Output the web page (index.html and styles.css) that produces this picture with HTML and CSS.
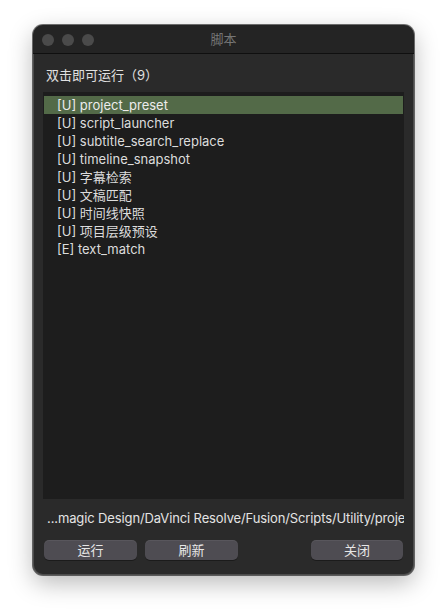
FILE: index.html
```html
<!DOCTYPE html>
<html lang="zh-CN">
<head>
<meta charset="utf-8">
<title>脚本</title>
<link rel="stylesheet" href="styles.css">
</head>
<body>
<div class="window">
  <div class="titlebar">
    <div class="lights"><span class="light"></span><span class="light"></span><span class="light"></span></div>
    <div class="title">脚本</div>
  </div>
  <div class="content">
    <div class="label">双击即可运行（9）</div>
    <ul class="list">
      <li class="row selected">[U] project_preset</li>
      <li class="row">[U] script_launcher</li>
      <li class="row">[U] subtitle_search_replace</li>
      <li class="row">[U] timeline_snapshot</li>
      <li class="row">[U] 字幕检索</li>
      <li class="row">[U] 文稿匹配</li>
      <li class="row">[U] 时间线快照</li>
      <li class="row">[U] 项目层级预设</li>
      <li class="row">[E] text_match</li>
    </ul>
    <div class="path">...magic Design/DaVinci Resolve/Fusion/Scripts/Utility/project_preset.py</div>
    <div class="buttons">
      <button class="btn">运行</button>
      <button class="btn">刷新</button>
      <span class="spacer"></span>
      <button class="btn close">关闭</button>
    </div>
  </div>
</div>
</body>
</html>
```
FILE: styles.css
```css
html, body {
  margin: 0;
  padding: 0;
  background: #ffffff;
}
body {
  width: 448px;
  height: 616px;
  overflow: hidden;
  font-family: "Inter", "Noto Sans CJK SC", sans-serif;
  font-size: 13px;
}
.window {
  margin: 25px 0 0 33px;
  width: 381px;
  height: 550px;
  box-sizing: border-box;
  border-radius: 10px;
  background: #2a2a2a;
  display: flex;
  flex-direction: column;
  overflow: hidden;
  box-shadow: 0 0 0 1px rgba(0,0,0,0.55), inset 0 0 0 1px rgba(255,255,255,0.16), 0 8px 24px rgba(0,0,0,0.28);
}
.titlebar {
  height: 28px;
  flex: none;
  background: #242424;
  border-bottom: 1px solid #0f0f0f;
  display: flex;
  align-items: center;
  position: relative;
}
.lights {
  display: flex;
  gap: 8px;
  padding-left: 9px;
  padding-top: 2px;
}
.light {
  width: 12px;
  height: 12px;
  border-radius: 50%;
  background: #4a4a4a;
}
.title {
  position: absolute;
  left: 0;
  right: 0;
  top: 0;
  line-height: 29px;
  text-align: center;
  color: #767676;
  font-size: 13px;
}
.content {
  flex: 1;
  display: flex;
  flex-direction: column;
  padding: 12px 10px 15px 10px;
  min-height: 0;
}
.label {
  line-height: 18px;
  height: 18px;
  padding-left: 3px;
  color: #e0e0e0;
}
.list {
  list-style: none;
  margin: 8px 0 0 0;
  padding: 4px 1px 0 1px;
  flex: 1;
  background: #1d1d1d;
  min-height: 0;
}
.row {
  height: 18px;
  line-height: 18px;
  padding-left: 13px;
  color: #dcdcdc;
  white-space: nowrap;
}
.row.selected {
  background: #536a48;
  color: #ececec;
}
.path {
  margin-top: 10px;
  height: 18px;
  line-height: 18px;
  padding-left: 4px;
  color: #e4e4e4;
  white-space: nowrap;
  overflow: hidden;
  letter-spacing: -0.12px;
}
.buttons {
  margin-top: 13px;
  display: flex;
  gap: 8px;
  padding: 0 1px;
}
.spacer {
  flex: 1;
}
.btn {
  width: 93px;
  height: 20px;
  border: none;
  border-radius: 5px;
  background: #4e4c52;
  color: #e6e6e6;
  font-family: "Inter", "Noto Sans CJK SC", sans-serif;
  font-size: 13px;
  line-height: 20px;
  padding: 0;
  box-shadow: 0 1px 0 rgba(0,0,0,0.35), inset 0 1px 0 rgba(255,255,255,0.06);
}
.btn.close {
  width: 92px;
}
```
